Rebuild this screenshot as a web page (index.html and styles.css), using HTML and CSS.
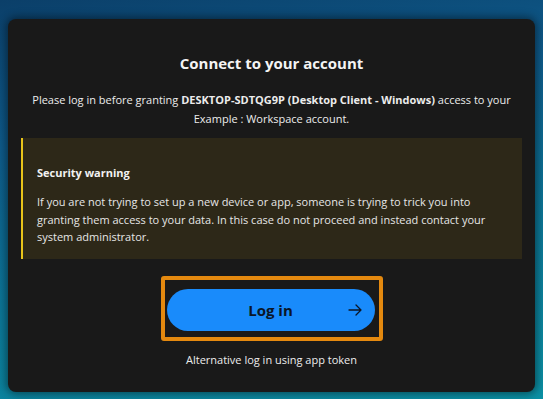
FILE: index.html
```html
<!DOCTYPE html>
<html lang="en">
<head>
<meta charset="utf-8">
<title>Connect to your account</title>
<link rel="stylesheet" href="styles.css">
</head>
<body>
<main class="card">
  <h1 class="title">Connect to your account</h1>
  <p class="intro">Please log in before granting <b>DESKTOP-SDTQG9P (Desktop Client - Windows)</b> access to your<br><span class="brand">Example : Workspace account.</span></p>
  <section class="warning">
    <h2 class="warning-title">Security warning</h2>
    <p class="warning-text">If you are not trying to set up a new device or app, someone is trying to trick you into granting them access to your data. In this case do not proceed and instead contact your system administrator.</p>
  </section>
  <div class="highlight">
    <button class="login" type="button">
      <span class="login-label">Log in</span>
      <svg class="arrow" width="14" height="12" viewBox="0 0 14 12" aria-hidden="true"><path d="M1 6H13M8 1L13 6L8 11" fill="none" stroke="#0b1626" stroke-width="1.3" stroke-linecap="round" stroke-linejoin="round"/></svg>
    </button>
  </div>
  <a class="alt" href="#">Alternative log in using app token</a>
</main>
</body>
</html>
```

FILE: styles.css
```css
html, body {
  margin: 0;
  height: 100%;
}
body {
  box-sizing: border-box;
  padding: 19px 8px 7px 8px;
  background: linear-gradient(170deg, #0b3f69 0%, #0e5a8a 30%, #0c7898 65%, #0b90a4 100%);
  font-family: "Open Sans", "Noto Sans", sans-serif;
  color: #f2f2f2;
  overflow: hidden;
}
.card {
  box-sizing: border-box;
  height: 373px;
  background: #191919;
  border-radius: 8px;
  box-shadow: 0 0 8px 2px rgba(0, 0, 0, 0.45);
  padding: 34px 13px 0;
  display: flex;
  flex-direction: column;
  align-items: center;
}
.title {
  margin: 0;
  font-size: 15px;
  line-height: 20px;
  font-weight: 700;
  color: #f4f4f4;
}
.intro {
  margin: 17px 0 0;
  font-size: 11px;
  line-height: 19px;
  text-align: center;
  color: #ececec;
}
.intro b {
  font-weight: 700;
}
.warning {
  box-sizing: border-box;
  align-self: stretch;
  margin-top: 10px;
  height: 121px;
  background: #2d2818;
  border-left: 2px solid #e8c41a;
  padding: 26px 14px 0;
}
.warning-title {
  margin: 0;
  font-size: 11px;
  line-height: 18px;
  font-weight: 700;
  color: #f2f2f2;
}
.warning-text {
  margin: 11px 0 0;
  font-size: 11px;
  line-height: 17.5px;
  color: #e6e6e6;
}
.highlight {
  box-sizing: border-box;
  margin-top: 17px;
  width: 222px;
  height: 65px;
  border: 4px solid #e4890f;
  border-radius: 3px;
  padding: 9px 4px 0 2px;
}
.login {
  box-sizing: border-box;
  width: 208px;
  height: 42px;
  border: 0;
  border-radius: 21px;
  background: #198bfb;
  font-family: inherit;
  position: relative;
  display: flex;
  align-items: center;
  justify-content: center;
  padding: 0;
}
.login-label {
  font-size: 15px;
  font-weight: 700;
  color: #0a1628;
}
.arrow {
  position: absolute;
  right: 13px;
  top: 15px;
}
.alt {
  margin-top: 11px;
  font-size: 11px;
  line-height: 16px;
  color: #ededed;
  text-decoration: none;
}
```
